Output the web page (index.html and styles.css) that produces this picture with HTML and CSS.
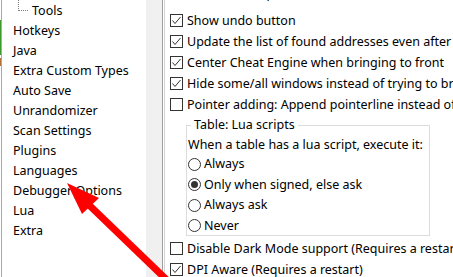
FILE: index.html
```html
<!DOCTYPE html>
<html>
<head>
<meta charset="utf-8">
<link rel="stylesheet" href="styles.css">
</head>
<body>
<div class="window">
  <div class="tree">
    <div class="edge"><span class="edge-green"></span><span class="edge-brown"></span></div>
    <ul class="items">
      <li class="item sub"><span class="dots"></span>Tools</li>
      <li class="item">Hotkeys</li>
      <li class="item">Java</li>
      <li class="item">Extra Custom Types</li>
      <li class="item">Auto Save</li>
      <li class="item">Unrandomizer</li>
      <li class="item">Scan Settings</li>
      <li class="item">Plugins</li>
      <li class="item">Languages</li>
      <li class="item">Debugger Options</li>
      <li class="item">Lua</li>
      <li class="item">Extra</li>
    </ul>
  </div>
  <div class="gutter"></div>
  <div class="divider"></div>
  <div class="options">
    <div class="row first"><span class="cb checked"><svg viewBox="0 0 13 13"><path d="M2.5 6.5 L5 9.5 L10.5 3" /></svg></span><span class="label">Save window positions and sizes</span></div>
    <div class="row"><span class="cb checked"><svg viewBox="0 0 13 13"><path d="M2.5 6.5 L5 9.5 L10.5 3" /></svg></span><span class="label">Show undo button</span></div>
    <div class="row"><span class="cb checked"><svg viewBox="0 0 13 13"><path d="M2.5 6.5 L5 9.5 L10.5 3" /></svg></span><span class="label">Update the list of found addresses even after scanning</span></div>
    <div class="row"><span class="cb checked"><svg viewBox="0 0 13 13"><path d="M2.5 6.5 L5 9.5 L10.5 3" /></svg></span><span class="label">Center Cheat Engine when bringing to front</span></div>
    <div class="row"><span class="cb checked"><svg viewBox="0 0 13 13"><path d="M2.5 6.5 L5 9.5 L10.5 3" /></svg></span><span class="label">Hide some/all windows instead of trying to bring them to front</span></div>
    <div class="row"><span class="cb"></span><span class="label">Pointer adding: Append pointerline instead of insert</span></div>
    <div class="group">
      <span class="legend">Table: Lua scripts</span>
      <div class="group-text">When a table has a lua script, execute it:</div>
      <div class="radio-row"><span class="rb"></span><span class="label">Always</span></div>
      <div class="radio-row"><span class="rb on"></span><span class="label">Only when signed, else ask</span></div>
      <div class="radio-row"><span class="rb"></span><span class="label">Always ask</span></div>
      <div class="radio-row"><span class="rb"></span><span class="label">Never</span></div>
    </div>
    <div class="row after-group"><span class="cb"></span><span class="label">Disable Dark Mode support (Requires a restart)</span></div>
    <div class="row"><span class="cb checked"><svg viewBox="0 0 13 13"><path d="M2.5 6.5 L5 9.5 L10.5 3" /></svg></span><span class="label">DPI Aware (Requires a restart)</span></div>
  </div>
</div>
<svg class="arrow" width="453" height="277" viewBox="0 0 453 277">
  <line x1="88" y1="204" x2="171" y2="284" stroke="#ff0000" stroke-width="7" />
  <polygon points="67,183 82,214 99,198" fill="#ff0000" />
</svg>
</body>
</html>
```
FILE: styles.css
```css
html, body {
  margin: 0;
  padding: 0;
  width: 453px;
  height: 277px;
  overflow: hidden;
  background: #ffffff;
}

body {
  font-family: "Noto Sans", "Liberation Sans", sans-serif;
  font-size: 12.5px;
  color: #000;
  position: relative;
}

.window {
  display: flex;
  height: 277px;
}

.tree {
  width: 146px;
  flex: none;
  display: flex;
  background: #fff;
}

.edge {
  width: 1px;
  border-right: 1px solid #a9a9a9;
  margin-right: 1px;
  display: flex;
  flex-direction: column;
  background: #fff;
}

.edge-green {
  display: block;
  margin-top: 20px;
  height: 35px;
  background: #3c9a2c;
}

.edge-brown {
  display: block;
  margin-top: 3px;
  height: 8px;
  background: #b0703a;
}

.items {
  list-style: none;
  margin: 0;
  padding: 1px 0 0 10px;
  flex: 1;
}

.item {
  height: 20px;
  line-height: 20px;
  white-space: nowrap;
  position: relative;
}

.item.sub {
  padding-left: 19px;
}

.dots {
  position: absolute;
  left: 5px;
  top: -1px;
  width: 9px;
  height: 10px;
  border-left: 1px dotted #808080;
  border-bottom: 1px dotted #808080;
}

.gutter {
  width: 16px;
  flex: none;
  background: #f0f0f0;
}

.divider {
  width: 1px;
  flex: none;
  border-left: 1px solid #a0a0a0;
  border-right: 1px solid #d4d4d4;
}

.options {
  flex: 1;
  padding-left: 5px;
  overflow: hidden;
  white-space: nowrap;
}

.row {
  height: 21px;
  display: flex;
  align-items: center;
}

.row.first {
  margin-top: -17px;
  margin-bottom: 6px;
}

.cb {
  width: 11px;
  height: 11px;
  border: 1px solid #333;
  background: #fff;
  flex: none;
  margin-right: 4px;
  position: relative;
}

.cb svg {
  position: absolute;
  left: -1px;
  top: -1px;
  width: 13px;
  height: 13px;
  fill: none;
  stroke: #333;
  stroke-width: 1;
}

.label {
  line-height: 16px;
}

.group {
  position: relative;
  margin: 10px 0 0 16px;
  width: 241px;
  border: 1px solid #dcdcdc;
  padding: 9px 0 0 1px;
  height: 100px;
  box-sizing: content-box;
}

.legend {
  position: absolute;
  left: 4px;
  top: -9px;
  padding: 0 3px 0 3px;
  background: #fff;
  line-height: 16px;
}

.group-text {
  height: 19px;
  line-height: 19px;
}

.radio-row {
  height: 20.5px;
  display: flex;
  align-items: center;
}

.rb {
  width: 11px;
  height: 11px;
  border: 1px solid #333;
  border-radius: 50%;
  flex: none;
  margin-right: 3px;
  display: flex;
  align-items: center;
  justify-content: center;
}

.rb.on::after {
  content: "";
  width: 7px;
  height: 7px;
  border-radius: 50%;
  background: #333;
}

.after-group {
  margin-top: 2px;
}

.arrow {
  position: absolute;
  left: 0;
  top: 0;
  pointer-events: none;
}
```
